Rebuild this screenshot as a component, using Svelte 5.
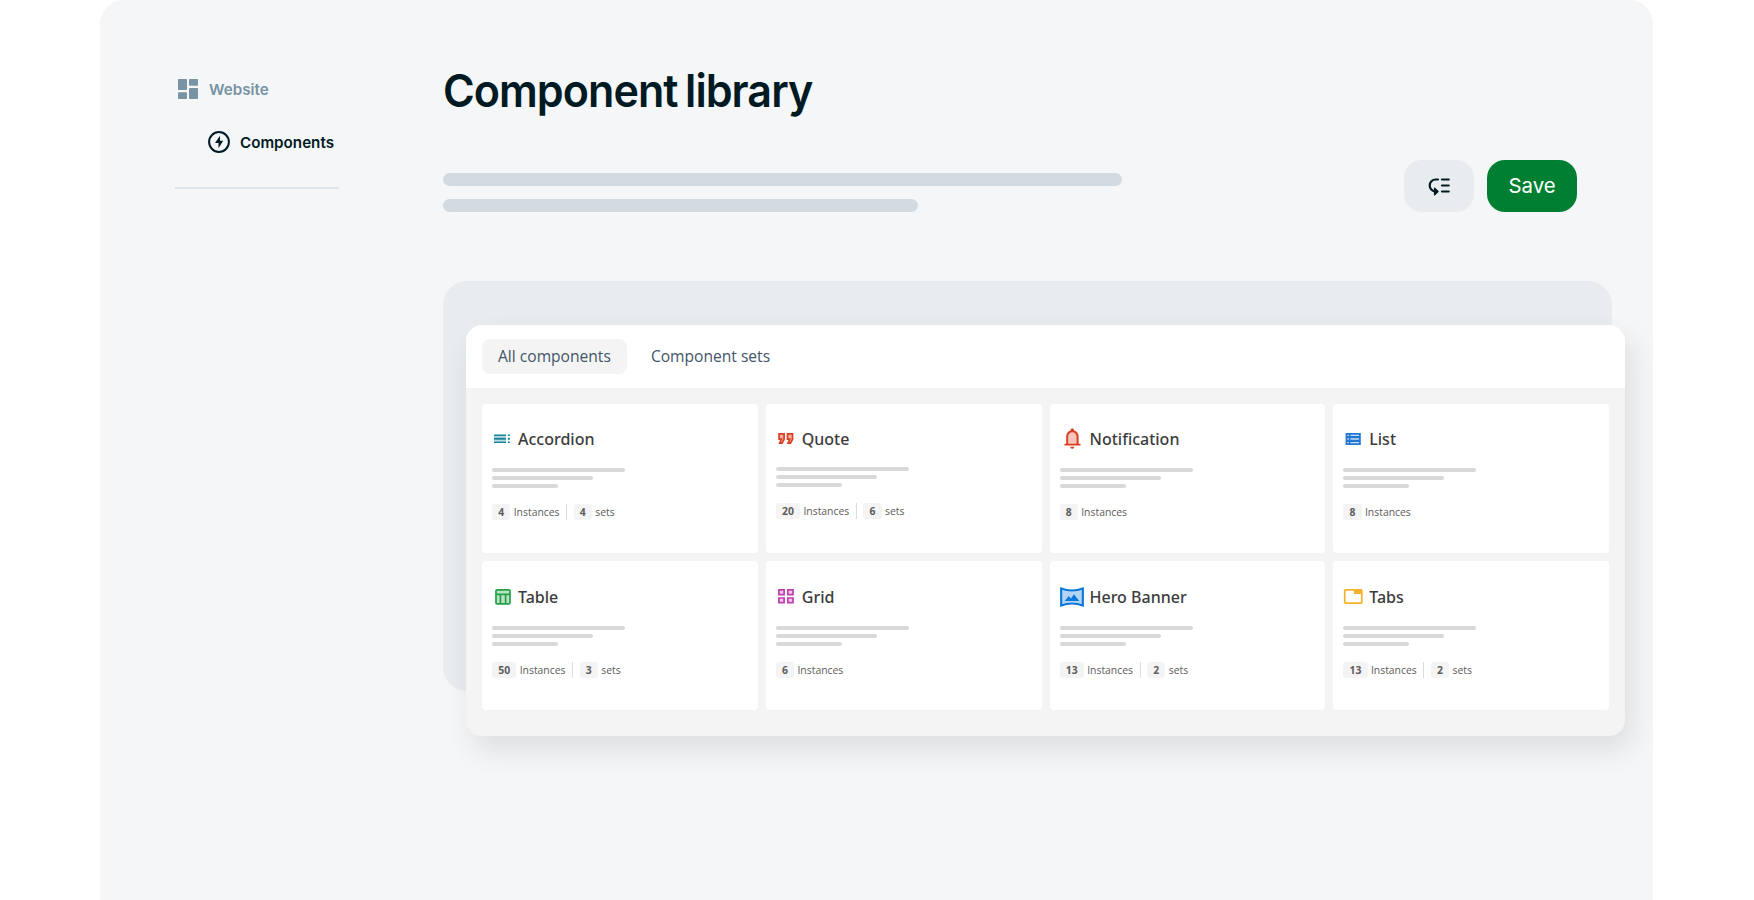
<script lang="ts">
	type Icon = 'accordion' | 'quote' | 'bell' | 'list' | 'table' | 'grid' | 'hero' | 'tabs';

	interface ComponentCard {
		name: string;
		icon: Icon;
		instances: number;
		sets?: number;
		density?: 'tight' | 'loose';
	}

	const tabs = ['All components', 'Component sets'];
	let active = $state('All components');

	const cards: ComponentCard[] = [
		{ name: 'Accordion', icon: 'accordion', instances: 4, sets: 4 },
		{ name: 'Quote', icon: 'quote', instances: 20, sets: 6, density: 'tight' },
		{ name: 'Notification', icon: 'bell', instances: 8 },
		{ name: 'List', icon: 'list', instances: 8 },
		{ name: 'Table', icon: 'table', instances: 50, sets: 3, density: 'loose' },
		{ name: 'Grid', icon: 'grid', instances: 6, density: 'loose' },
		{ name: 'Hero Banner', icon: 'hero', instances: 13, sets: 2, density: 'loose' },
		{ name: 'Tabs', icon: 'tabs', instances: 13, sets: 2, density: 'loose' }
	];
</script>

{#snippet cardIcon(icon: Icon)}
	{#if icon === 'accordion'}
		<svg width="20" height="20" viewBox="0 0 20 20" fill="#15839a">
			<path d="M2 5.5h12V7H2zM2 8.7h12v2H2zM2 12.5h12V14H2z" />
			<path d="M15.8 5.5h2V7h-2zM15.8 8.7h2v2h-2zM15.8 12.5h2V14h-2z" />
			<path d="M2 7h12v1.7H2zM2 10.7h12v1.8H2z" opacity=".3" />
		</svg>
	{:else if icon === 'quote'}
		<svg width="20" height="20" viewBox="0 0 20 20" fill="#f3b5a8" stroke="#da3e20" stroke-width="1.7">
			<path d="M3.1 4.8h5v5.6l-2 3.7H3.7l1.7-3.9H3.1z" />
			<path d="M11.5 4.8h5v5.6l-2 3.7h-2.4l1.7-3.9h-2.3z" />
		</svg>
	{:else if icon === 'bell'}
		<svg width="24" height="24" viewBox="0 0 24 24" fill="#da3e20">
			<path d="M12.3 1.5c-1 0-1.7.7-1.7 1.6v.5C7.9 4.3 6.2 6.6 6.2 9.5v7.3H4.5v1.8h16v-1.8h-1.9V9.5c0-2.9-1.7-5.2-4.6-5.9v-.5c0-.9-.7-1.6-1.7-1.6z" />
			<path d="M8.1 16.8V9.7c0-2.6 1.7-4.5 4.2-4.5s4.3 1.9 4.3 4.5v7.1z" fill="#f5c5bb" />
			<path d="M10.3 19.8h4c0 1.2-.8 2-2 2s-2-.8-2-2z" />
		</svg>
	{:else if icon === 'list'}
		<svg width="20" height="20" viewBox="0 0 20 20">
			<path d="M2.6 4h15.2v12H2.6z" fill="#2478d4" />
			<path d="M4.3 5.8h1.5V7H4.3zM4.3 9.2h1.5v1.6H4.3zM4.3 13h1.5v1.2H4.3zM7.5 5.8H16V7H7.5zM7.5 9.2H16v1.6H7.5zM7.5 13H16v1.2H7.5z" fill="#c6ddf6" />
		</svg>
	{:else if icon === 'table'}
		<svg width="20" height="20" viewBox="0 0 20 20" fill="#b9e3c3" stroke="#24a148" stroke-width="1.7">
			<rect x="4" y="2.8" width="14" height="14" rx="1" />
			<path d="M4 7.3h14M8.4 7.3v9.5M13.6 7.3v9.5" />
		</svg>
	{:else if icon === 'grid'}
		<svg width="20" height="20" viewBox="0 0 20 20" fill="#f0c8ea" stroke="#bf3fae" stroke-width="1.7">
			<path d="M2.9 2.9h5.2v4.7H2.9zM11.8 2.9H17v4.7h-5.2zM2.9 11h5.2v4.7H2.9zM11.8 11H17v4.7h-5.2z" />
		</svg>
	{:else if icon === 'hero'}
		<svg width="24" height="24" viewBox="0 0 24.6 24">
			<path d="M1.2 3.4c7.4 2.6 14.8 2.6 22.2 0v17.2c-7.4-2.6-14.8-2.6-22.2 0z" fill="#b5d4f3" stroke="#0b78dc" stroke-width="2.2" />
			<path d="M4.8 16L9 11l2.3 2.500 3-4.200 5.500 6.700z" fill="#0b78dc" />
		</svg>
	{:else}
		<svg width="20" height="20" viewBox="0 0 20 20">
			<rect x="1.700" y="2.800" width="17.100" height="13.400" rx="1" fill="none" stroke="#f3b229" stroke-width="1.700" />
			<path d="M11 2.500h8v4.500h-8z" fill="#f3b229" />
		</svg>
	{/if}
{/snippet}

<div class="frame">
	<aside class="sidebar">
		<a class="nav nav--parent" href="#website">
			<svg width="20" height="20" viewBox="0 0 20 20" fill="#7893a3">
				<rect width="9" height="11" rx=".8" />
				<rect x="11" width="9" height="6.7" rx=".8" />
				<rect y="13.2" width="9" height="6.8" rx=".8" />
				<rect x="11" y="9" width="9" height="11" rx=".8" />
			</svg>
			<span>Website</span>
		</a>
		<a class="nav nav--child" href="#components">
			<svg width="22" height="22" viewBox="0 0 22 22">
				<circle cx="11" cy="11" r="9.9" fill="none" stroke="#001a23" stroke-width="2" />
				<path d="M12 4.700v5h3.200l-4.700 7.500v-5.200H7z" fill="#001a23" />
			</svg>
			<span>Components</span>
		</a>
		<hr class="sidebar__rule" />
	</aside>

	<main class="main">
		<h1 class="title">Component library</h1>

		<div class="toolbar">
			<div class="intro">
				<span class="intro__line"></span>
				<span class="intro__line intro__line--short"></span>
			</div>
			<div class="actions">
				<button class="btn btn--icon" aria-label="Reorder">
					<svg width="24" height="24" viewBox="0 0 24 24" fill="none" stroke="#001a23" stroke-width="2.2" stroke-linecap="round">
						<path d="M15 5.500h6.700M15 11.500h6.700M15 17.500h6.700" />
						<path d="M11 5.500H8.700a6 6 0 0 0 0 12H10" />
						<path d="M7.600 14.200l3.400 3.300-3.400 3.300z" fill="#001a23" stroke-width="1.400" stroke-linejoin="round" />
					</svg>
				</button>
				<button class="btn btn--save">Save</button>
			</div>
		</div>

		<section class="stage">
			<div class="panel">
				<nav class="tabs">
					{#each tabs as tab}
						<button class="tab" class:tab--active={active === tab} onclick={() => (active = tab)}>
							{tab}
						</button>
					{/each}
				</nav>
				<div class="cards">
					{#each cards as card}
						<article class="card {card.density ?? ''}">
							<h2 class="card__title">
								{@render cardIcon(card.icon)}
								{card.name}
							</h2>
							<div class="lines">
								<span></span>
								<span></span>
								<span></span>
							</div>
							<div class="stats">
								<b>{card.instances}</b>
								<span>Instances</span>
								{#if card.sets}
									<i></i>
									<b>{card.sets}</b>
									<span>sets</span>
								{/if}
							</div>
						</article>
					{/each}
				</div>
			</div>
		</section>
	</main>
</div>

<style>
	:global(body) {
		overflow: hidden;
		background: #fff;
	}

	.frame {
		display: flex;
		gap: 104px;
		box-sizing: border-box;
		width: 1553px;
		height: 900px;
		margin-left: 100px;
		padding: 65px 28px 0 75px;
		border-radius: 24px 24px 0 0;
		background: #f4f6f8;
		color: #001a23;
		font-family: Inter, sans-serif;
	}

	.sidebar {
		flex: none;
		width: 164px;
		padding-top: 12px;
	}

	.nav {
		display: flex;
		align-items: center;
		height: 24px;
		font-size: 15.2px;
		font-weight: 600;
		text-decoration: none;
	}

	.nav--parent {
		gap: 11px;
		padding-left: 3px;
		color: #7893a3;
	}

	.nav--parent span {
		padding-top: 1px;
	}

	.nav--child {
		gap: 10px;
		margin-top: 29px;
		padding-left: 33px;
		color: #001a23;
	}

	.sidebar__rule {
		height: 2px;
		margin: 33px 0 0;
		border: 0;
		background: #dde5eb;
	}

	.main {
		flex: none;
		width: 1169px;
	}

	.title {
		margin: 0;
		font-size: 45px;
		font-weight: 600;
		line-height: 52px;
		letter-spacing: -1px;
		word-spacing: -2.5px;
		white-space: nowrap;
		transform: scaleX(0.957);
		transform-origin: 0 50%;
	}

	.toolbar {
		display: flex;
		justify-content: space-between;
		margin-top: 42px;
		padding-right: 35px;
	}

	.intro {
		display: grid;
		align-content: start;
		gap: 13px;
		padding-top: 14px;
	}

	.intro__line {
		width: 679px;
		height: 13px;
		border-radius: 7px;
		background: #d1dbe1;
	}

	.intro__line--short {
		width: 475px;
	}

	.actions {
		display: flex;
		gap: 13px;
		padding-top: 1px;
	}

	.btn {
		display: grid;
		place-items: center;
		height: 52px;
		padding: 0;
		border: 0;
		border-radius: 18px;
		font: 400 20.4px Inter, sans-serif;
	}

	.btn--icon {
		width: 70px;
		background: #e8ecef;
	}

	.btn--save {
		width: 90px;
		padding-bottom: 2px;
		background: #007f33;
		color: #fff;
	}

	.stage {
		box-sizing: border-box;
		height: 410px;
		margin-top: 69px;
		padding: 44px 0 0 23px;
		border-radius: 24px;
		background: #e8ecef;
	}

	.panel {
		width: 1159px;
		height: 411px;
		border-radius: 16px;
		background: #f4f4f4;
		box-shadow: 7px 14px 28px rgb(35 42 50 / 11%);
	}

	.tabs {
		display: flex;
		gap: 8px;
		box-sizing: border-box;
		height: 63px;
		padding: 14px 16px;
		border-radius: 16px 16px 0 0;
		background: #fff;
	}

	.tab {
		height: 35px;
		padding: 0 16px 2px;
		border: 0;
		border-radius: 8px;
		background: none;
		color: #42546a;
		font: 400 15.6px 'Open Sans', sans-serif;
	}

	.tab--active {
		background: #f4f4f4;
	}

	.cards {
		display: grid;
		grid-template-columns: repeat(4, 1fr);
		gap: 8px;
		padding: 16px;
	}

	.card {
		--shift: 0px;
		box-sizing: border-box;
		height: 149px;
		padding: 23px 10px 0;
		border-radius: 4px;
		background: #fff;
	}

	.card.tight {
		--shift: -1px;
	}

	.card.loose {
		--shift: 1px;
	}

	.card__title {
		display: flex;
		align-items: center;
		gap: 6px;
		height: calc(24px + var(--shift));
		margin: 0;
		color: #3c3c3c;
		font: 500 16px/24px 'Noto Sans', sans-serif;
	}

	.lines {
		display: grid;
		gap: 4px;
		margin-top: 17px;
	}

	.lines span {
		width: 133px;
		height: 4px;
		border-radius: 2px;
		background: #d9d9d9;
	}

	.lines span:nth-child(2) {
		width: 101px;
	}

	.lines span:nth-child(3) {
		width: 66px;
	}

	.stats {
		display: flex;
		align-items: center;
		height: 16px;
		margin-top: 16px;
		color: #5c5c5c;
		font: 400 10.4px/16px 'Open Sans', sans-serif;
	}

	.stats b {
		margin-right: 3.4px;
		padding: 0 6.2px;
		border-radius: 3px;
		background: #f4f4f4;
		font-weight: 700;
	}

	.stats i {
		width: 1px;
		height: 16px;
		margin: 0 6.5px;
		background: #dcdcdc;
	}
</style>
